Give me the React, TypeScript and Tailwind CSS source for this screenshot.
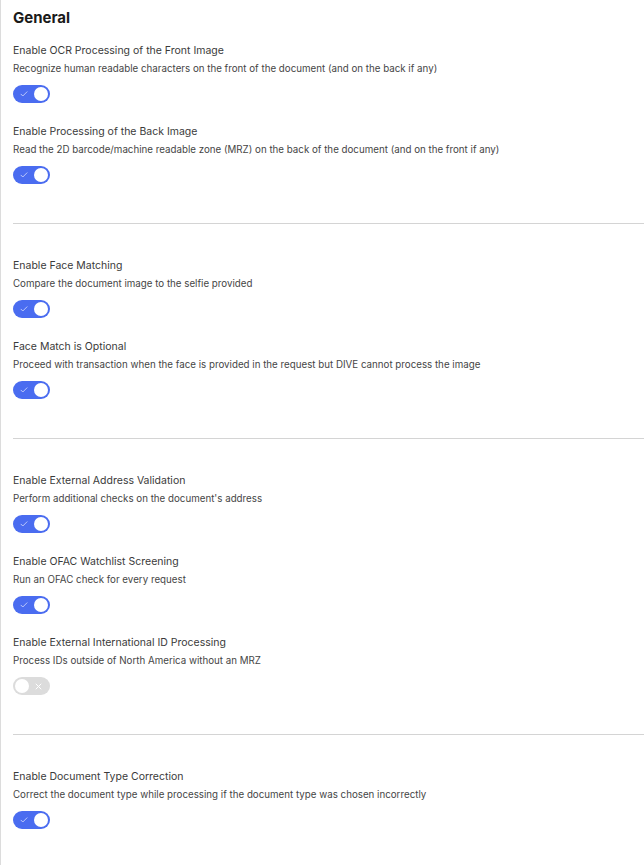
const sections = [
  [
    {
      label: "Enable OCR Processing of the Front Image",
      desc: "Recognize human readable characters on the front of the document (and on the back if any)",
      on: true,
    },
    {
      label: "Enable Processing of the Back Image",
      desc: "Read the 2D barcode/machine readable zone (MRZ) on the back of the document (and on the front if any)",
      on: true,
    },
  ],
  [
    {
      label: "Enable Face Matching",
      desc: "Compare the document image to the selfie provided",
      on: true,
    },
    {
      label: "Face Match is Optional",
      desc: "Proceed with transaction when the face is provided in the request but DIVE cannot process the image",
      on: true,
    },
  ],
  [
    {
      label: "Enable External Address Validation",
      desc: "Perform additional checks on the document's address",
      on: true,
    },
    {
      label: "Enable OFAC Watchlist Screening",
      desc: "Run an OFAC check for every request",
      on: true,
    },
    {
      label: "Enable External International ID Processing",
      desc: "Process IDs outside of North America without an MRZ",
      on: false,
    },
  ],
  [
    {
      label: "Enable Document Type Correction",
      desc: "Correct the document type while processing if the document type was chosen incorrectly",
      on: true,
    },
  ],
];

function Toggle({ on }: { on: boolean }) {
  if (on) {
    return (
      <div className="flex h-[18px] w-[37px] items-center justify-between rounded-full bg-[#4a6cf0] pl-[7px] pr-[2px]">
        <svg width="8" height="8" viewBox="0 0 8 8" fill="none">
          <path d="M1 4.2l1.8 1.8L7 1.8" stroke="#c9d3fb" strokeWidth="0.9" strokeLinecap="round" strokeLinejoin="round" />
        </svg>
        <div className="h-[14px] w-[14px] rounded-full bg-white" />
      </div>
    );
  }
  return (
    <div className="flex h-[18px] w-[37px] items-center justify-between rounded-full bg-[#dcdcdc] pl-[2px] pr-[8px]">
      <div className="h-[14px] w-[14px] rounded-full bg-white" />
      <svg width="7" height="7" viewBox="0 0 7 7" fill="none">
        <path d="M1 1l5 5M6 1L1 6" stroke="#ffffff" strokeWidth="1" strokeLinecap="round" />
      </svg>
    </div>
  );
}

function App() {
  return (
    <div className="min-h-screen w-full bg-white font-['Inter',sans-serif]">
      <div className="min-h-[865px] border-l border-[#dcdcdc] pl-[12px] pt-[8px]">
        <h1 className="text-[15px] font-bold leading-[20px] text-[#1a1a1a]">General</h1>
        <div className="mt-[13px] flex flex-col">
          {sections.map((items, si) => (
            <div key={si} className="flex flex-col">
              {si > 0 && <div className="mb-[32px] mt-[39px] h-px w-full bg-[#d4d4d4]" />}
              <div className="flex flex-col gap-[19px]">
                {items.map((it) => (
                  <div key={it.label} className="flex flex-col">
                    <p className="text-[10.5px] leading-[19px] text-[#3a3a3a]">{it.label}</p>
                    <p className="text-[9.75px] leading-[18px] text-[#454545]">{it.desc}</p>
                    <div className="mt-[7px]">
                      <Toggle on={it.on} />
                    </div>
                  </div>
                ))}
              </div>
            </div>
          ))}
        </div>
      </div>
    </div>
  );
}

export default App;
